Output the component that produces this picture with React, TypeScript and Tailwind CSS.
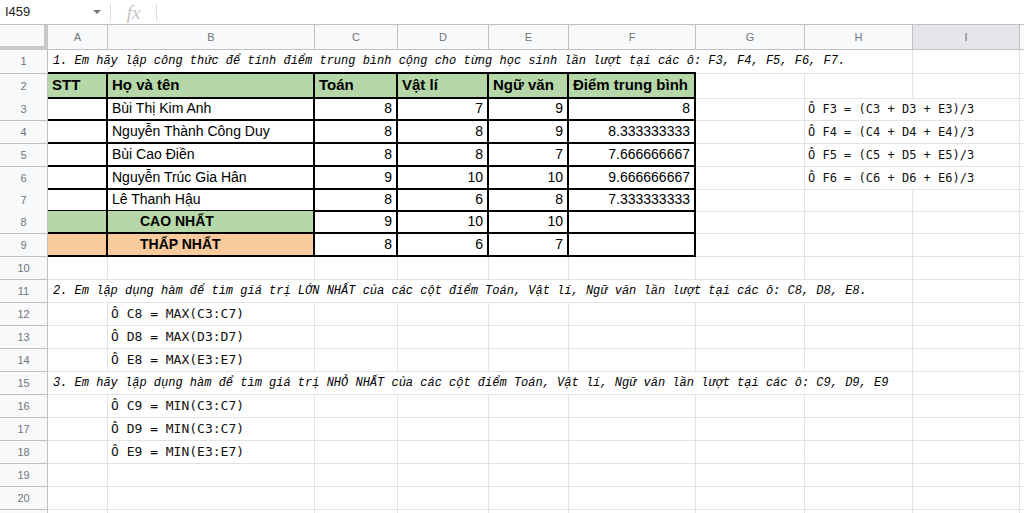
import React from 'react'

// lưới cột giống Google Sheets: tiêu đề hàng + A..I + phần thừa
const grid = 'grid grid-cols-[48px_60px_207px_83px_91px_80px_127px_109px_108px_107px_1fr]'

const sans = "font-['Liberation_Sans',Arial,sans-serif]"
const mono = "font-['Liberation_Mono','DejaVu_Sans_Mono',monospace]"
// công thức chỉ có ký tự Latin cơ bản + Ô nên dùng được DejaVu (đậm hơn)
const monoBold = "font-['DejaVu_Sans_Mono','Liberation_Mono',monospace]"

// kiểu viền ô
const B = {
  g: 'border-r border-b border-[#e2e3e3]',
  gb: 'border-b border-[#e2e3e3]',
  kb: 'border-b-2 border-black',
  k: 'border-r-2 border-b-2 border-black',
}

const GREEN = 'bg-[#b6d7a8]'
const ORANGE = 'bg-[#f9cb9c]'

function Cell({ b = 'g', className = '', children }: { b?: keyof typeof B; className?: string; children?: React.ReactNode }) {
  return (
    <div className={`box-border flex h-full items-center whitespace-nowrap overflow-visible ${B[b]} ${className}`}>
      {children}
    </div>
  )
}

function Row({ n, h = 'h-[23px]', children }: { n?: number; h?: string; children: React.ReactNode }) {
  return (
    <div className={`${grid} ${h}`}>
      <div className={`box-border flex items-center justify-center border-r border-b border-[#c0c0c0] bg-[#f8f9fa] text-[11px] text-[#70757a] ${sans}`}>
        {n}
      </div>
      {children}
    </div>
  )
}

const students = [
  { name: 'Bùi Thị Kim Anh', s: [8, 7, 9], avg: '8', f: 'Ô F3 = (C3 + D3 + E3)/3', h: 'h-[23px]' },
  { name: 'Nguyễn Thành Công Duy', s: [8, 8, 9], avg: '8.333333333', f: 'Ô F4 = (C4 + D4 + E4)/3', h: 'h-[23px]' },
  { name: 'Bùi Cao Điền', s: [8, 8, 7], avg: '7.666666667', f: 'Ô F5 = (C5 + D5 + E5)/3', h: 'h-[23px]' },
  { name: 'Nguyễn Trúc Gia Hân', s: [9, 10, 10], avg: '9.666666667', f: 'Ô F6 = (C6 + D6 + E6)/3', h: 'h-[22px]' },
  { name: 'Lê Thanh Hậu', s: [8, 6, 8], avg: '7.333333333', f: '', h: 'h-[22px]' },
]

const num = `justify-end pr-[4px] text-[14px] text-black ${sans}`
const head = `pl-[4px] text-[15px] font-bold text-black ${sans}`
const note = `pl-[5px] text-[12px] italic text-black ${mono}`
const formula = `pl-[3px] text-[13px] text-[#111] ${monoBold}`

function NoteRow({ n, text }: { n: number; text: string }) {
  return (
    <Row n={n}>
      <Cell b="gb" className={note}>{text}</Cell>
      <Cell b="gb" />
      <Cell b="gb" />
      <Cell b="gb" />
      <Cell b="gb" />
      <Cell b="gb" />
      <Cell b="gb" />
      <Cell />
      <Cell />
      <Cell b="gb" />
    </Row>
  )
}

function FormulaRow({ n, text }: { n?: number; text?: string }) {
  return (
    <Row n={n}>
      <Cell />
      <Cell className={formula}>{text}</Cell>
      <Cell />
      <Cell />
      <Cell />
      <Cell />
      <Cell />
      <Cell />
      <Cell />
      <Cell b="gb" />
    </Row>
  )
}

export default function App() {
  return (
    <div className={`h-[513px] w-[1024px] overflow-hidden bg-white ${sans}`}>
      {/* thanh công thức */}
      <div className="box-border flex h-[25px] items-center border-b border-[#c0c0c0]">
        <div className="flex w-[110px] items-center justify-between pl-[5px] pr-[9px] text-[13px] text-[#222]">
          <span>I459</span>
          <span className="h-0 w-0 border-x-[4px] border-t-[4px] border-x-transparent border-t-[#777]" />
        </div>
        <div className="h-[17px] w-px bg-[#dadce0]" />
        <span className="w-[45px] text-center font-['Liberation_Serif',serif] text-[19px] italic leading-none text-[#c4c4c4]">fx</span>
        <div className="h-[17px] w-px bg-[#dadce0]" />
      </div>

      {/* tiêu đề cột */}
      <div className={`${grid} h-[25px]`}>
        <div className="box-border border-r-4 border-b-4 border-[#c8c8c8] bg-[#f8f9fa]" />
        {['A', 'B', 'C', 'D', 'E', 'F', 'G', 'H', 'I'].map((c) => (
          <div
            key={c}
            className={`box-border flex items-center justify-center border-r border-b border-[#c0c0c0] text-[11px] text-[#70757a] ${
              c === 'I' ? 'bg-[#e3e5e9]' : 'bg-[#f8f9fa]'
            }`}
          >
            {c}
          </div>
        ))}
        <div className="box-border border-b border-[#c0c0c0] bg-[#f8f9fa]" />
      </div>

      {/* hàng 1 */}
      <Row n={1} h="h-[24px]">
        <Cell b="kb" className={note}>
          1. Em hãy lập công thức để tính điểm trung bình cộng cho từng học sinh lần lượt tại các ô: F3, F4, F5, F6, F7.
        </Cell>
        <Cell b="kb" />
        <Cell b="kb" />
        <Cell b="kb" />
        <Cell b="kb" />
        <Cell b="kb" />
        <Cell b="gb" />
        <Cell />
        <Cell />
        <Cell b="gb" />
      </Row>

      {/* hàng 2: tiêu đề bảng */}
      <Row n={2} h="h-[24px]">
        {['STT', 'Họ và tên', 'Toán', 'Vật lí', 'Ngữ văn', 'Điểm trung bình'].map((h) => (
          <Cell key={h} b="k" className={`${GREEN} ${head}`}>
            {h}
          </Cell>
        ))}
        <Cell />
        <Cell />
        <Cell />
        <Cell b="gb" />
      </Row>

      {students.map((st, i) => (
        <Row key={st.name} n={i + 3} h={st.h}>
          <Cell b="k" />
          <Cell b="k" className={`pl-[4px] text-[14px] text-black ${sans}`}>
            {st.name}
          </Cell>
          {st.s.map((v, j) => (
            <Cell key={j} b="k" className={num}>
              {v}
            </Cell>
          ))}
          <Cell b="k" className={num}>
            {st.avg}
          </Cell>
          <Cell />
          {st.f ? (
            <Cell b="gb" className={`pl-[3px] text-[12px] text-[#111] ${monoBold}`}>
              {st.f}
            </Cell>
          ) : (
            <Cell />
          )}
          <Cell />
          <Cell b="gb" />
        </Row>
      ))}

      {/* hàng 8, 9 */}
      {[
        { n: 8, label: 'CAO NHẤT', bg: GREEN, s: [9, 10, 10] },
        { n: 9, label: 'THẤP NHẤT', bg: ORANGE, s: [8, 6, 7] },
      ].map((r) => (
        <Row key={r.n} n={r.n}>
          <Cell b="k" className={r.bg} />
          <Cell b="k" className={`${r.bg} pl-[32px] text-[14px] font-bold text-black ${sans}`}>
            {r.label}
          </Cell>
          {r.s.map((v, j) => (
            <Cell key={j} b="k" className={num}>
              {v}
            </Cell>
          ))}
          <Cell b="k" />
          <Cell />
          <Cell />
          <Cell />
          <Cell b="gb" />
        </Row>
      ))}

      <FormulaRow n={10} />
      <NoteRow
        n={11}
        text="2. Em lập dụng hàm để tìm giá trị LỚN NHẤT của các cột điểm Toán, Vật lí, Ngữ văn lần lượt tại các ô: C8, D8, E8."
      />
      <FormulaRow n={12} text="Ô C8 = MAX(C3:C7)" />
      <FormulaRow n={13} text="Ô D8 = MAX(D3:D7)" />
      <FormulaRow n={14} text="Ô E8 = MAX(E3:E7)" />
      <NoteRow
        n={15}
        text="3. Em hãy lập dụng hàm để tìm giá trị NHỎ NHẤT của các cột điểm Toán, Vật lí, Ngữ văn lần lượt tại các ô: C9, D9, E9"
      />
      <FormulaRow n={16} text="Ô C9 = MIN(C3:C7)" />
      <FormulaRow n={17} text="Ô D9 = MIN(C3:C7)" />
      <FormulaRow n={18} text="Ô E9 = MIN(E3:E7)" />
      <FormulaRow n={19} />
      <FormulaRow n={20} />
      <FormulaRow />
    </div>
  )
}
